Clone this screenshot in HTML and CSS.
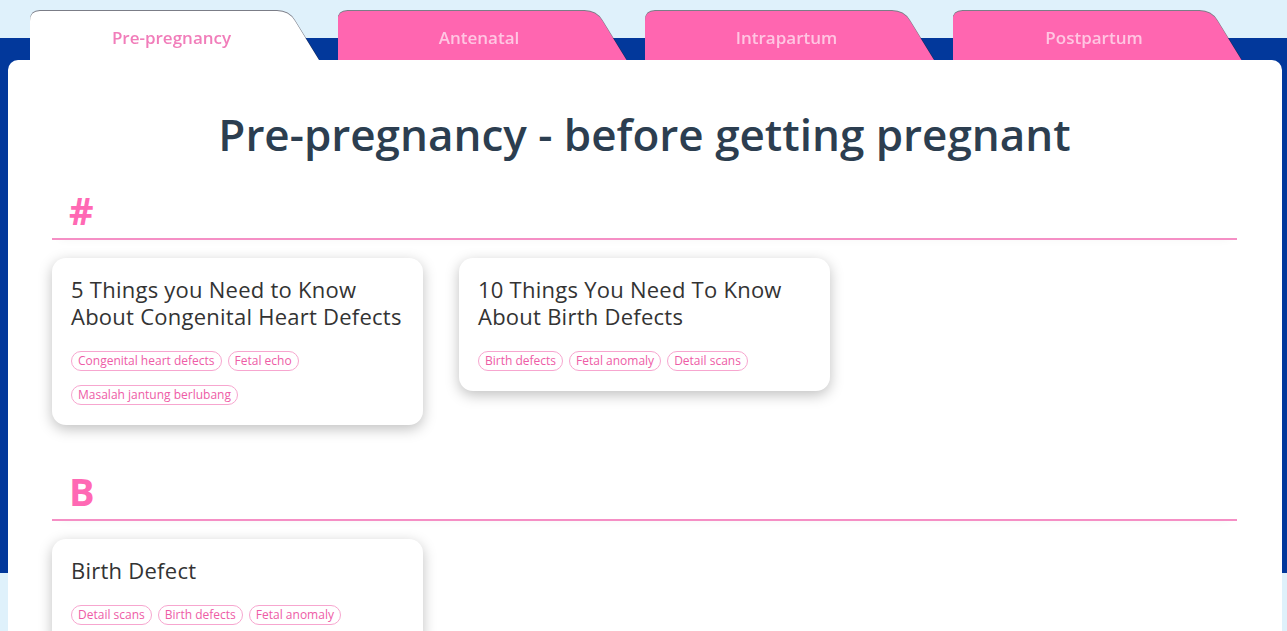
FILE: index.html
```html
<!DOCTYPE html>
<html lang="en">
<head>
<meta charset="utf-8">
<title>Pre-pregnancy</title>
<link rel="stylesheet" href="styles.css">
</head>
<body>
  <nav class="tabs">
    <a class="tab tab-active" href="#">Pre-pregnancy</a>
    <a class="tab" href="#">Antenatal</a>
    <a class="tab" href="#">Intrapartum</a>
    <a class="tab" href="#">Postpartum</a>
  </nav>

  <main class="panel">
    <h1 class="page-title">Pre-pregnancy - before getting pregnant</h1>

    <section class="group">
      <h2 class="group-letter">#</h2>
      <div class="cards">
        <article class="card">
          <h3 class="card-title">5 Things you Need to Know About Congenital Heart Defects</h3>
          <div class="tags">
            <span class="tag">Congenital heart defects</span>
            <span class="tag">Fetal echo</span>
            <span class="tag">Masalah jantung berlubang</span>
          </div>
        </article>
        <article class="card">
          <h3 class="card-title">10 Things You Need To Know About Birth Defects</h3>
          <div class="tags">
            <span class="tag">Birth defects</span>
            <span class="tag">Fetal anomaly</span>
            <span class="tag">Detail scans</span>
          </div>
        </article>
      </div>
    </section>

    <section class="group">
      <h2 class="group-letter">B</h2>
      <div class="cards">
        <article class="card">
          <h3 class="card-title">Birth Defect</h3>
          <div class="tags">
            <span class="tag">Detail scans</span>
            <span class="tag">Birth defects</span>
            <span class="tag">Fetal anomaly</span>
          </div>
        </article>
      </div>
    </section>
  </main>
</body>
</html>
```

FILE: styles.css
```css
* {
  box-sizing: border-box;
}

body {
  margin: 0;
  font-family: "Open Sans", "Noto Sans", sans-serif;
  background: linear-gradient(to bottom,
    #dff1fb 0, #dff1fb 38px,
    #02389b 38px, #02389b 573px,
    #dff1fb 573px);
  min-height: 631px;
}

/* folder tabs */
.tabs {
  display: flex;
  gap: 18.5px;
  padding: 11px 0 0 30px;
  height: 60px;
  filter: drop-shadow(0 -1px 0.6px rgba(40, 30, 40, 0.55));
}

.tab {
  flex: 0 0 289px;
  height: 49px;
  display: flex;
  align-items: center;
  justify-content: center;
  padding: 3px 6px 0 0;
  background: #ff66b0;
  color: #ffc6e2;
  font-size: 17px;
  font-weight: 600;
  text-decoration: none;
  clip-path: path("M0 49 L0 10 Q0 0 10 0 L247 0 Q259 0 265 10 L289 49 Z");
}

.tab-active {
  background: #ffffff;
  color: #f17dba;
}

/* main sheet */
.panel {
  background: #ffffff;
  margin: 0 5px 0 8px;
  border-radius: 10px 10px 0 0;
  padding: 48px 45px 40px 44px;
  min-height: 620px;
}

.page-title {
  margin: 0;
  text-align: center;
  font-size: 44px;
  line-height: 1.2;
  font-weight: 600;
  color: #2c3e50;
}

.group {
  margin-top: 43px;
}

.page-title + .group {
  margin-top: 26px;
}

.group-letter {
  margin: 0;
  padding: 0 0 5px 17px;
  font-size: 38px;
  line-height: 46px;
  font-weight: 700;
  color: #ff69b4;
  border-bottom: 2px solid #f58fc5;
  box-shadow: 0 6px 10px -8px rgba(0, 0, 0, 0.06);
}

.cards {
  display: flex;
  flex-wrap: wrap;
  align-items: flex-start;
  gap: 36px;
  margin-top: 18px;
}

.card {
  width: 371px;
  background: #ffffff;
  border-radius: 14px;
  padding: 18px 19px 20px;
  box-shadow: 0 4px 14px rgba(0, 0, 0, 0.25);
}

.card-title {
  margin: 0;
  font-size: 22px;
  line-height: 27px;
  font-weight: 500;
  letter-spacing: 0.25px;
  color: #333333;
}

.tags {
  display: flex;
  flex-wrap: wrap;
  gap: 14px 6px;
  margin-top: 21px;
}

.tag {
  display: inline-block;
  font-size: 12px;
  line-height: 18px;
  padding: 0 6px;
  color: #ee5ca6;
  border: 1px solid #f7a6cf;
  border-radius: 10px;
}
```
